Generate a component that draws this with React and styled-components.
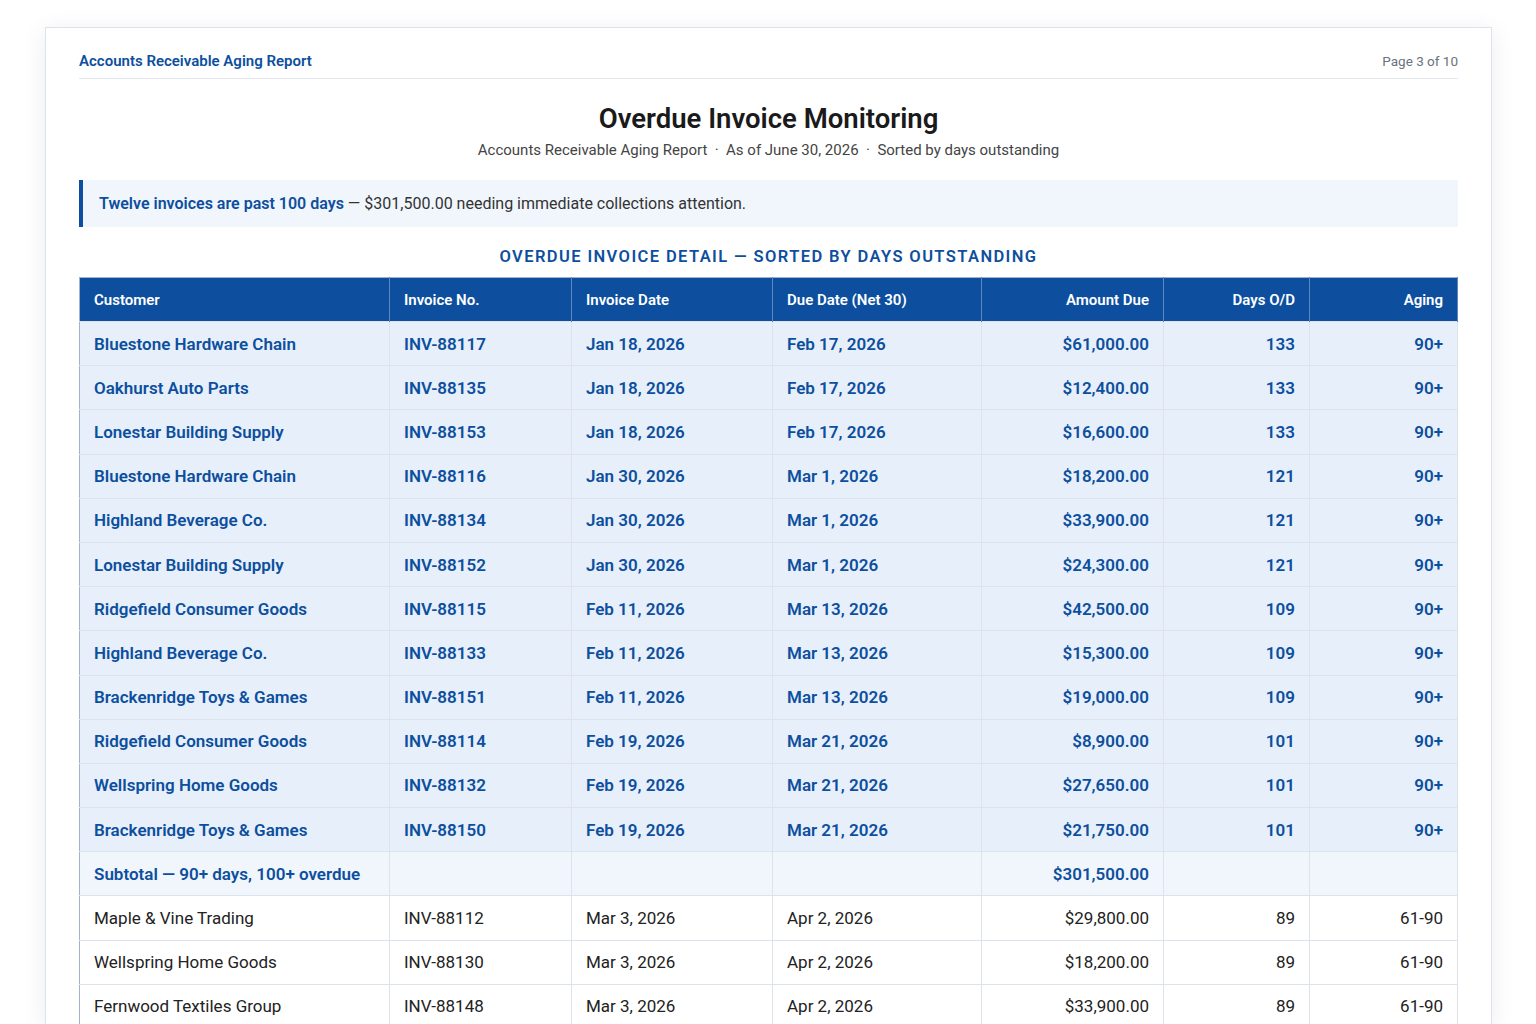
import React from "react";
import styled, { createGlobalStyle } from "styled-components";

const G = createGlobalStyle`
  *, *::before, *::after { box-sizing: border-box; }
  body { margin:0; background:#fff; font-family: Roboto, "Liberation Sans", sans-serif; }
`;
const Page = styled.div`padding:27px 44px 0 45px;`;
const Card = styled.div`
  background:#fff; border:1px solid #dbe3ee; border-bottom:none;
  box-shadow:0 4px 24px rgba(0,0,0,0.08); padding:24px 33px 0 33px; height:1000px; overflow:hidden;
`;
const Top = styled.div`
  display:flex; justify-content:space-between; align-items:center;
  border-bottom:1px solid #e3e7ed; padding-bottom:8px; font-size:15px;
`;
const TopTitle = styled.div`color:#0d4f9e; font-weight:600;`;
const TopPage = styled.div`color:#6b7280; font-size:13.5px;`;
const Title = styled.h1`margin:23px 0 0; text-align:center; font-size:27.5px; font-weight:600; color:#1a1a1a; line-height:34px;`;
const Sub = styled.div`text-align:center; font-size:15px; color:#444; margin-top:5px;`;
const Callout = styled.div`
  margin-top:21px; background:#f1f6fc; border-left:4px solid #0d4f9e; height:47px;
  display:flex; align-items:center; padding-left:16px; font-size:16px; color:#333;
  b { color:#0d4f9e; font-weight:600; }
`;
const Section = styled.div`
  text-align:center; margin-top:20px; font-size:16.5px; font-weight:600; color:#0d4f9e;
  letter-spacing:1.4px; line-height:20px;
`;
const Table = styled.table`
  margin-top:10px; width:100%; border-collapse:collapse; table-layout:fixed; font-size:17px;
  border:1px solid #9fb3cc;
`;
const Th = styled.th`
  background:#0d4f9e; color:#fff; font-size:15px; font-weight:600; height:44px;
  text-align:${p=>p.r?"right":"left"}; padding:0 14px; border-right:1px solid #5e86ba;
`;
const Tr = styled.tr`
  background:${p=>p.sub?"#f1f6fc":p.hot?"#e7f0fa":"#fff"};
  color:${p=>p.hot||p.sub?"#0d4f9e":"#222"};
  font-weight:${p=>p.hot||p.sub?600:400};
`;
const Td = styled.td`
  height:44.2px; padding:0 14px; border:1px solid #dde3ea; border-left:none;
  text-align:${p=>p.r?"right":"left"}; white-space:nowrap;
`;

const hot = [
 ["Bluestone Hardware Chain","INV-88117","Jan 18, 2026","Feb 17, 2026","$61,000.00","133"],
 ["Oakhurst Auto Parts","INV-88135","Jan 18, 2026","Feb 17, 2026","$12,400.00","133"],
 ["Lonestar Building Supply","INV-88153","Jan 18, 2026","Feb 17, 2026","$16,600.00","133"],
 ["Bluestone Hardware Chain","INV-88116","Jan 30, 2026","Mar 1, 2026","$18,200.00","121"],
 ["Highland Beverage Co.","INV-88134","Jan 30, 2026","Mar 1, 2026","$33,900.00","121"],
 ["Lonestar Building Supply","INV-88152","Jan 30, 2026","Mar 1, 2026","$24,300.00","121"],
 ["Ridgefield Consumer Goods","INV-88115","Feb 11, 2026","Mar 13, 2026","$42,500.00","109"],
 ["Highland Beverage Co.","INV-88133","Feb 11, 2026","Mar 13, 2026","$15,300.00","109"],
 ["Brackenridge Toys & Games","INV-88151","Feb 11, 2026","Mar 13, 2026","$19,000.00","109"],
 ["Ridgefield Consumer Goods","INV-88114","Feb 19, 2026","Mar 21, 2026","$8,900.00","101"],
 ["Wellspring Home Goods","INV-88132","Feb 19, 2026","Mar 21, 2026","$27,650.00","101"],
 ["Brackenridge Toys & Games","INV-88150","Feb 19, 2026","Mar 21, 2026","$21,750.00","101"],
];
const rest = [
 ["Maple & Vine Trading","INV-88112","Mar 3, 2026","Apr 2, 2026","$29,800.00","89"],
 ["Wellspring Home Goods","INV-88130","Mar 3, 2026","Apr 2, 2026","$18,200.00","89"],
 ["Fernwood Textiles Group","INV-88148","Mar 3, 2026","Apr 2, 2026","$33,900.00","89"],
];
const widths=[310,182,201,209,182,146,148];

const Row = ({d,aging,hot}) => (
  <Tr hot={hot}>
    {d.slice(0,4).map((c,i)=><Td key={i}>{c}</Td>)}
    <Td r>{d[4]}</Td><Td r>{d[5]}</Td><Td r>{aging}</Td>
  </Tr>
);

export default function App(){
  return (<><G/><Page><Card>
    <Top><TopTitle>Accounts Receivable Aging Report</TopTitle><TopPage>Page 3 of 10</TopPage></Top>
    <Title>Overdue Invoice Monitoring</Title>
    <Sub>Accounts Receivable Aging Report &nbsp;·&nbsp; As of June 30, 2026 &nbsp;·&nbsp; Sorted by days outstanding</Sub>
    <Callout><span><b>Twelve invoices are past 100 days</b> — $301,500.00 needing immediate collections attention.</span></Callout>
    <Section>OVERDUE INVOICE DETAIL — SORTED BY DAYS OUTSTANDING</Section>
    <Table>
      <colgroup>{widths.map((w,i)=><col key={i} style={{width:w}}/>)}</colgroup>
      <thead><tr>
        <Th>Customer</Th><Th>Invoice No.</Th><Th>Invoice Date</Th><Th>Due Date (Net 30)</Th>
        <Th r>Amount Due</Th><Th r>Days O/D</Th><Th r>Aging</Th>
      </tr></thead>
      <tbody>
        {hot.map((d,i)=><Row key={i} d={d} aging="90+" hot/>)}
        <Tr sub><Td>Subtotal — 90+ days, 100+ overdue</Td><Td/><Td/><Td/><Td r>$301,500.00</Td><Td/><Td/></Tr>
        {rest.map((d,i)=><Row key={i} d={d} aging="61-90"/>)}
      </tbody>
    </Table>
  </Card></Page></>);
}
